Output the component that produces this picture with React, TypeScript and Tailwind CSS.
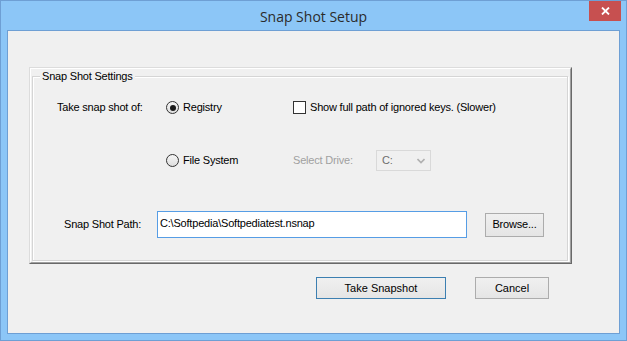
import React from 'react';

const Radio: React.FC<{ checked?: boolean; label: string }> = ({ checked, label }) => (
  <label className="flex items-center gap-[4px]">
    <span className="w-[13px] h-[13px] rounded-full border border-[#333333] bg-gradient-to-b from-[#f6f6f6] to-[#dedede] flex items-center justify-center">
      {checked && <span className="w-[6px] h-[6px] rounded-full bg-[#1a1a1a]" />}
    </span>
    <span>{label}</span>
  </label>
);

const App: React.FC = () => {
  return (
    <div className="w-[627px] h-[341px] bg-[#8cc6f7] border border-[#6e9fd4] flex flex-col font-['Liberation_Sans',Arial,sans-serif] text-[11px] tracking-[-0.2px] text-black">
      {/* title bar */}
      <div className="relative h-[29px] flex items-center justify-center">
        <span className="font-['Open_Sans',sans-serif] text-[14px] tracking-normal text-[#2b2b2b] mt-[1px]">Snap Shot Setup</span>
        <div className="absolute right-[5px] top-0 w-[32px] h-[20px] bg-[#c75050] flex items-center justify-center">
          <svg width="9" height="8" viewBox="0 0 9 8">
            <path d="M1 0.5 L8 7.5 M8 0.5 L1 7.5" stroke="white" strokeWidth="1.8" />
          </svg>
        </div>
      </div>

      {/* client area */}
      <div className="mx-[6px] h-[304px] border border-[#6e9fd4] bg-[#f0f0f0] relative">
        <div className="ml-[21px] mt-[36px] w-[543px] h-[197px] border-t border-l border-[#dcdcdc] border-r border-b border-r-[#696969] border-b-[#696969]">
          <div className="h-full border-t border-l border-white border-r border-b border-r-[#a0a0a0] border-b-[#a0a0a0] pt-[7px] pl-[1px]">
            {/* group box */}
            <div className="relative h-[185px] w-[536px] border border-[#d5d5d5] shadow-[1px_1px_0_#ffffff,inset_1px_1px_0_#ffffff]">
              <span className="absolute -top-[7px] left-[7px] bg-[#f0f0f0] px-[2px] leading-[13px]">Snap Shot Settings</span>

              <div className="flex items-center pt-[24px] h-[37px]">
                <span className="ml-[24px] w-[109px]">Take snap shot of:</span>
                <div className="w-[127px]">
                  <Radio checked label="Registry" />
                </div>
                <label className="flex items-center gap-[4px]">
                  <span className="w-[13px] h-[13px] border border-[#333333] bg-white" />
                  <span>Show full path of ignored keys. (Slower)</span>
                </label>
              </div>

              <div className="flex items-center mt-[36px]">
                <div className="ml-[133px] w-[127px]">
                  <Radio label="File System" />
                </div>
                <span className="w-[83px] text-[#a0a0a0]">Select Drive:</span>
                <div className="w-[55px] h-[21px] border border-[#d9d9d9] bg-[#f0f0f0] flex items-center justify-between pl-[5px] pr-[5px] text-[#6d6d6d]">
                  <span>C:</span>
                  <svg width="8" height="6" viewBox="0 0 8 6">
                    <path d="M0.5 1 L4 4.5 L7.5 1" stroke="#b0b0b0" strokeWidth="1.6" fill="none" />
                  </svg>
                </div>
              </div>

              <div className="flex items-center mt-[40px]">
                <span className="ml-[31px] w-[93px]">Snap Shot Path:</span>
                <div className="w-[310px] h-[27px] border border-[#569de5] bg-white pl-[2px] pt-[3px]">
                  C:\Softpedia\Softpediatest.nsnap
                </div>
                <button className="ml-[18px] w-[59px] h-[24px] border border-[#acacac] bg-gradient-to-b from-[#f0f0f0] to-[#e5e5e5] text-[11px] tracking-[-0.2px]">
                  Browse...
                </button>
              </div>
            </div>
          </div>
        </div>

        <div className="flex mt-[13px]">
          <button className="ml-[308px] w-[130px] h-[22px] border border-[#3c7fb1] bg-gradient-to-b from-[#f0f0f0] to-[#e5e5e5] text-[11px] tracking-[0px]">
            Take Snapshot
          </button>
          <button className="ml-[29px] w-[74px] h-[22px] border border-[#acacac] bg-gradient-to-b from-[#f0f0f0] to-[#e5e5e5] text-[11px] tracking-[0px]">
            Cancel
          </button>
        </div>
      </div>
    </div>
  );
};

export default App;
